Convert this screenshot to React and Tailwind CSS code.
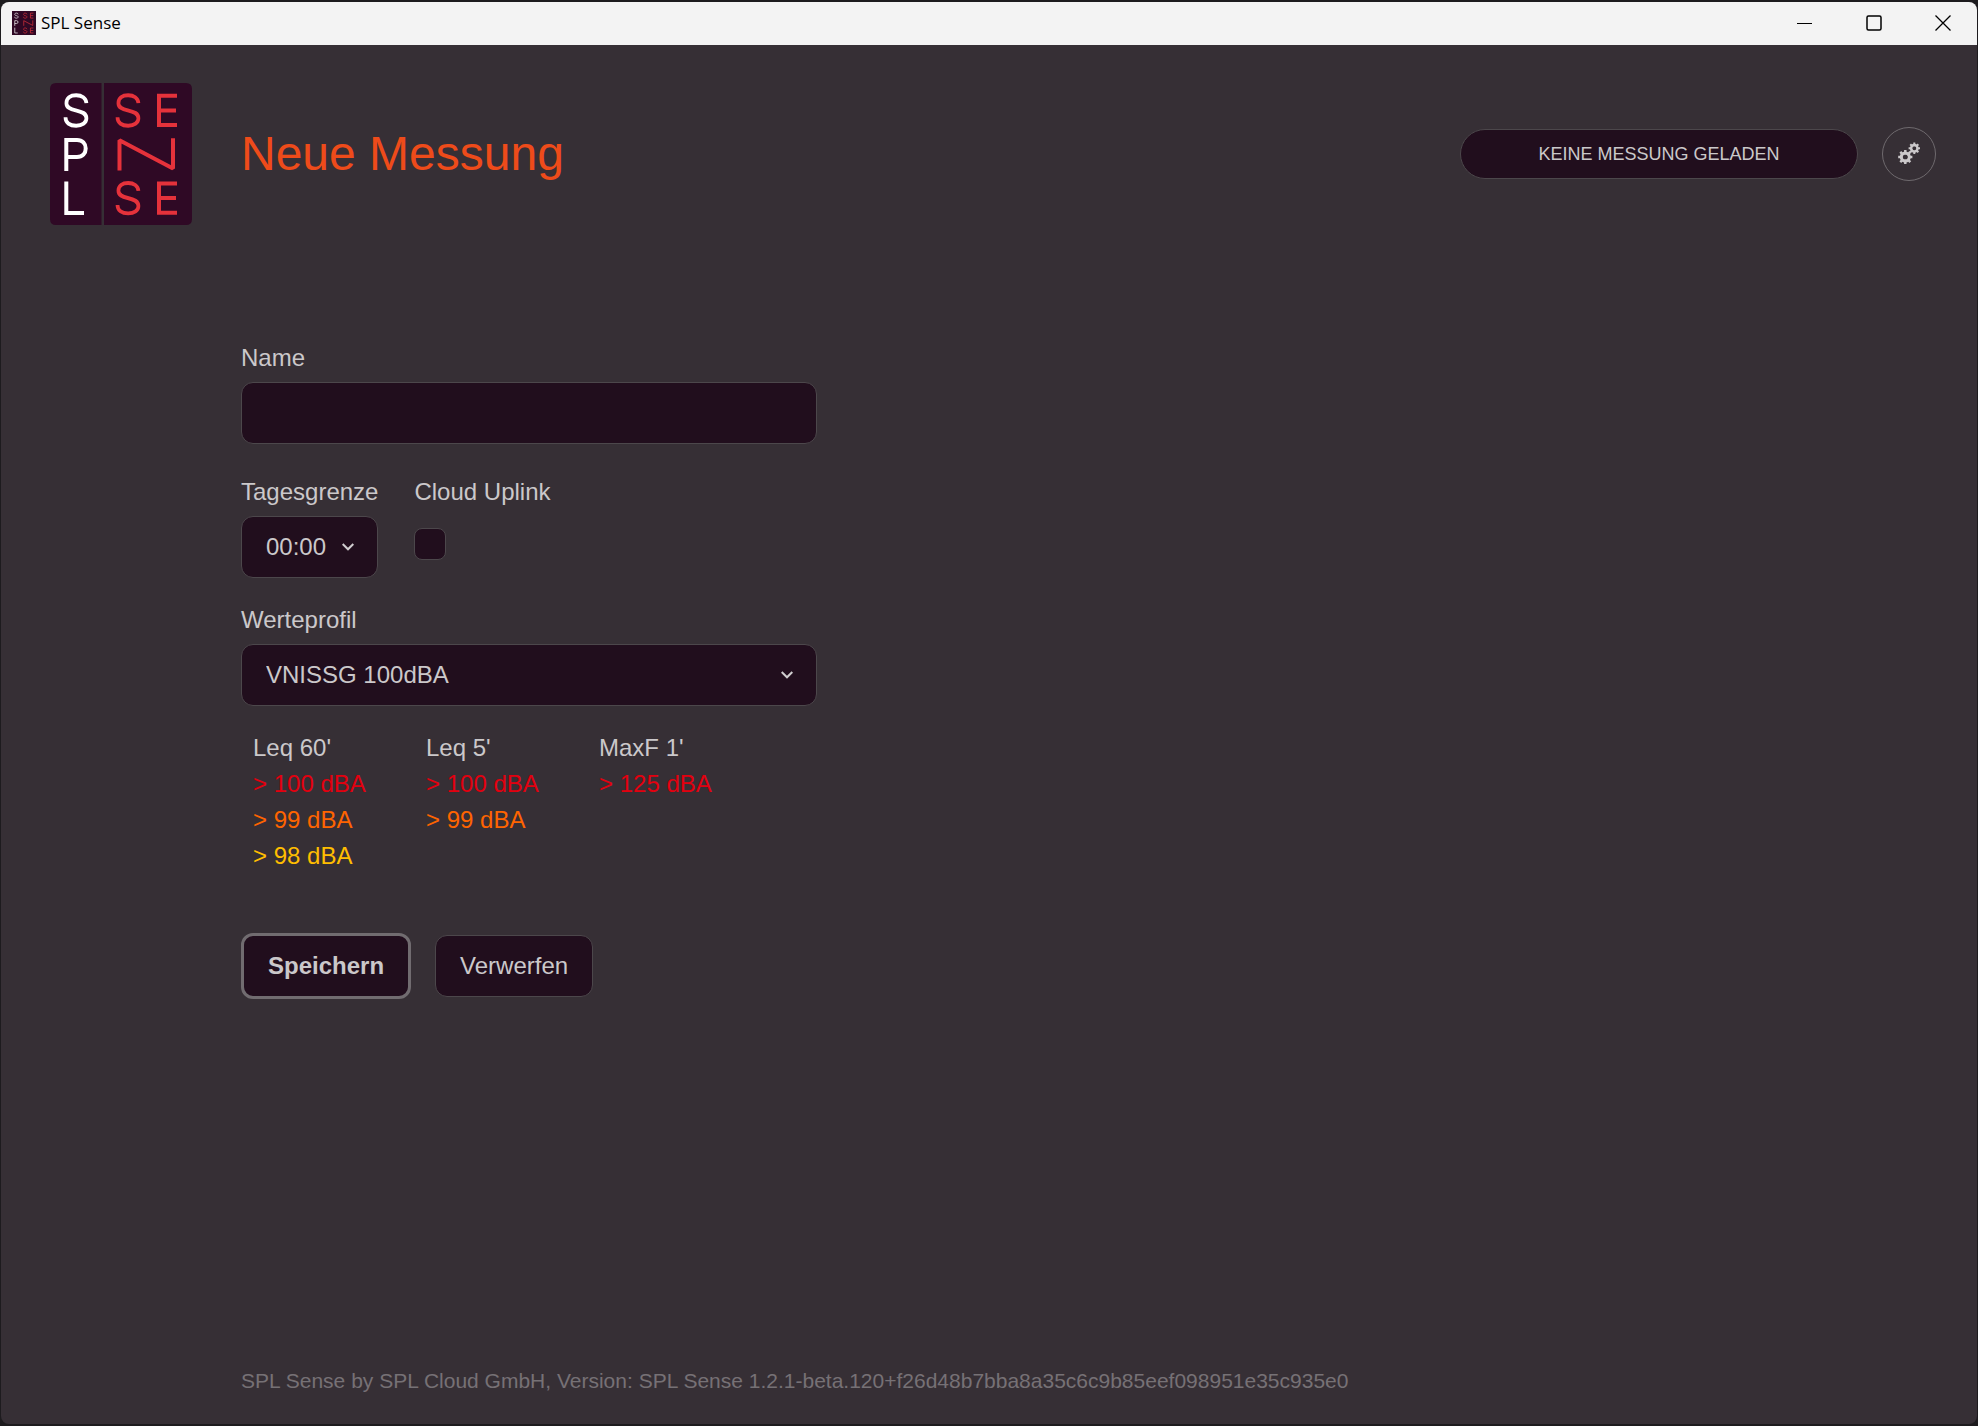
import React from "react";

const GEAR_TEETH = [0, 45, 90, 135];

function Gear({ cx, cy, r, hole, tooth }) {
  return (
    <g transform={`translate(${cx} ${cy})`}>
      {GEAR_TEETH.map((a) => (
        <path key={a} transform={`rotate(${a})`} stroke="#cbc8ca" strokeWidth={tooth} d={`M0 ${-r}V${-hole}M0 ${hole}V${r}`} />
      ))}
      <circle r={(r * 0.78 + hole) / 2} fill="none" stroke="#cbc8ca" strokeWidth={r * 0.78 - hole} />
    </g>
  );
}

const LOGO_S = "M22.500 8C22 3 17.500 0 11.500 0C5 0 1 3 1 8C1 12.500 5 14 11 15.300C18 16.800 22.500 18.500 22.500 23.500C22.500 28 18 31 11.500 31C4.500 31 0 28 0 22.500";

function Logo({ className }) {
  return (
    <svg className={className} viewBox="0 0 142 142" role="img" aria-label="SPL Sense">
      <path fill="#2f0925" d="M6 0H51.500V142H6Q0 142 0 136V6Q0 0 6 0Z" />
      <path fill="#2f0925" d="M54 0H136Q142 0 142 6V136Q142 142 136 142H54Z" />
      <g fill="none" strokeWidth="4" stroke="#fff">
        <path transform="translate(15.500 12.300) scale(.93 .98)" d={LOGO_S} />
        <path d="M16.300 88V57H27C32.500 57 35.700 60.500 35.700 65.500C35.700 70.500 32.500 74 27 74H16.300" />
        <path d="M16.300 98.500V130H34" />
      </g>
      <g fill="none" strokeWidth="4" stroke="#e5323b">
        <path transform="translate(67.500 12.300) scale(.93 .98)" d={LOGO_S} />
        <path transform="translate(67.500 100) scale(.93 .98)" d={LOGO_S} />
        <path d="M127 12.700H109V42H127M109 27.500H126" />
        <path d="M127 100.500H109V129.800H127M109 115H126" />
        <path strokeLinejoin="bevel" d="M69.500 87.500V57.200L123 85.500V55.200" />
      </g>
    </svg>
  );
}

function Chevron() {
  return (
    <svg className="pointer-events-none absolute top-1/2 right-6 h-2 w-3 -translate-y-1/2" viewBox="0 0 12 8" aria-hidden="true">
      <path d="M.7 1L6 6.300L11.300 1" fill="none" stroke="#d0cdcf" strokeWidth="2" />
    </svg>
  );
}

const FIELD = "h-[62px] w-full appearance-none rounded-xl border border-[#4c474b] bg-[#210e1d] px-6 text-2xl text-[#cbc8ca]";

function SelectField({ id, label, value, className }) {
  return (
    <div className={className}>
      <label htmlFor={id} className="mb-1.5 block">{label}</label>
      <div className="relative">
        <select id={id} className={FIELD} defaultValue={value}>
          <option>{value}</option>
        </select>
        <Chevron />
      </div>
    </div>
  );
}

const PROFILE = [
  { title: "Leq 60'", limits: ["> 100 dBA", "> 99 dBA", "> 98 dBA"] },
  { title: "Leq 5'", limits: ["> 100 dBA", "> 99 dBA"] },
  { title: "MaxF 1'", limits: ["> 125 dBA"] },
];
const LIMIT_COLORS = ["text-[#e3000f]", "text-[#ff6400]", "text-[#ffbe00]"];

export default function App() {
  return (
    <div className="flex min-h-screen flex-col bg-[#1d1b1e] px-px py-0.5 font-['Liberation_Sans',Arial,sans-serif]">
      <div className="flex flex-1 flex-col overflow-hidden rounded-lg bg-[#362f35]">
        <header className="flex h-[43px] items-center bg-[#f3f3f3] pb-0.5 pl-[11px] text-black">
          <Logo className="size-6 bg-[#2f0925]" />
          <span className="ml-[5px] font-['Open_Sans',sans-serif] text-[17px]">SPL Sense</span>
          <div className="ml-auto flex h-full">
            <button aria-label="Minimieren" className="grid w-[69px] place-items-center">
              <svg className="size-4" viewBox="0 0 16 16"><path d="M0 8.500H15" stroke="#000" /></svg>
            </button>
            <button aria-label="Maximieren" className="grid w-[69px] place-items-center">
              <svg className="size-4" viewBox="0 0 16 16"><rect x="1" y="1" width="14" height="14" rx="1.500" fill="none" stroke="#000" strokeWidth="1.500" /></svg>
            </button>
            <button aria-label="Schließen" className="grid w-[69px] place-items-center">
              <svg className="size-4" viewBox="0 0 16 16"><path d="M.5 .5L15.500 15.500M15.500 .5L.5 15.500" stroke="#000" strokeWidth="1.300" /></svg>
            </button>
          </div>
        </header>

        <div className="flex items-center pt-[38px] pr-[41px] pl-[49px]">
          <Logo className="size-[142px]" />
          <h1 className="ml-[49px] text-5xl text-[#ee4b1a]">Neue Messung</h1>
          <div className="ml-auto flex h-[50px] w-[398px] items-center justify-center rounded-full border border-[#4c474b] bg-[#210e1d] text-lg text-[#cbc8ca]">
            KEINE MESSUNG GELADEN
          </div>
          <button aria-label="Einstellungen" className="ml-6 grid size-[54px] place-items-center rounded-full border border-[#6f6a6e]">
            <svg className="size-6" viewBox="0 0 24 24" aria-hidden="true">
              <Gear cx={8.3} cy={15} r={7.1} hole={2.6} tooth={2.5} />
              <Gear cx={17.3} cy={6.3} r={5.7} hole={2.1} tooth={2} />
            </svg>
          </button>
        </div>

        <form className="mt-[115px] ml-60 w-[576px] text-2xl leading-9 text-[#cbc8ca]" onSubmit={(e) => e.preventDefault()}>
          <label htmlFor="name" className="mb-1.5 block">Name</label>
          <input id="name" type="text" className={FIELD} />

          <div className="mt-[30px] flex gap-9">
            <SelectField id="day-limit" label="Tagesgrenze" value="00:00" className="" />
            <div>
              <label htmlFor="uplink" className="block">Cloud Uplink</label>
              <input id="uplink" type="checkbox" className="mt-[18px] block size-8 appearance-none rounded-lg border border-[#4c474b] bg-[#210e1d] checked:bg-[#ee4b1a]" />
            </div>
          </div>

          <SelectField id="profile" label="Werteprofil" value="VNISSG 100dBA" className="mt-6" />

          <div className="mt-6 flex pl-3">
            {PROFILE.map((col) => (
              <div key={col.title} className="w-[173px]">
                <div>{col.title}</div>
                {col.limits.map((text, i) => (
                  <div key={text} className={LIMIT_COLORS[i]}>{text}</div>
                ))}
              </div>
            ))}
          </div>

          <div className="mt-[59px] flex items-center gap-6">
            <button type="submit" className="h-[66px] rounded-xl border-3 border-[#716c70] bg-[#210e1d] px-6 font-bold">Speichern</button>
            <button type="button" className="h-[62px] rounded-xl border border-[#4c474b] bg-[#210e1d] px-6">Verwerfen</button>
          </div>
        </form>

        <footer className="mt-auto ml-60 pb-[27px] text-[21px] leading-8 text-[#767175]">
          SPL Sense by SPL Cloud GmbH, Version: SPL Sense 1.2.1-beta.120+f26d48b7bba8a35c6c9b85eef098951e35c935e0
        </footer>
      </div>
    </div>
  );
}
